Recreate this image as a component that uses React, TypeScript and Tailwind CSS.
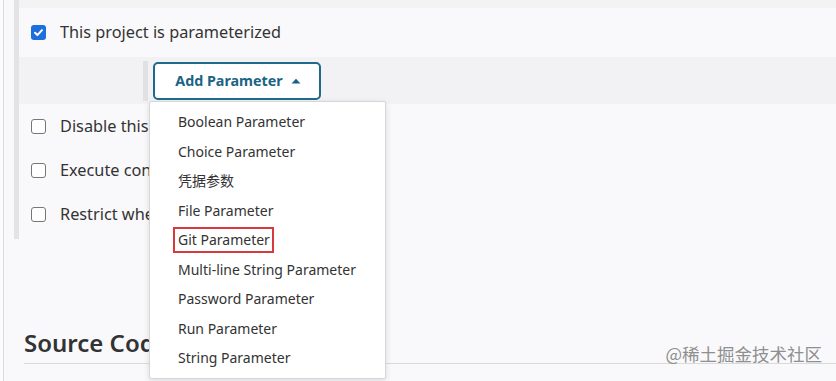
import { useState } from "react"

const items = [
  "Boolean Parameter",
  "Choice Parameter",
  "凭据参数",
  "File Parameter",
  "Git Parameter",
  "Multi-line String Parameter",
  "Password Parameter",
  "Run Parameter",
  "String Parameter",
];

const font = { fontFamily: '"Noto Sans", "Noto Sans CJK SC", sans-serif' };

const Checkbox = ({ checked }: { checked?: boolean }) =>
  checked ? (
    <span className="flex h-[15px] w-[15px] items-center justify-center rounded-[3px] bg-[#1c6fdc]">
      <svg width="11" height="11" viewBox="0 0 12 12" fill="none">
        <path d="M2.2 6.3 4.8 8.8 9.8 3.4" stroke="white" strokeWidth="2.2" strokeLinecap="round" strokeLinejoin="round" />
      </svg>
    </span>
  ) : (
    <span className="block h-[15px] w-[15px] rounded-[3px] border border-[#767676] bg-white" />
  );

const OptionRow = ({ label, checked }: { label: string; checked?: boolean }) => (
  <div className="flex h-[44px] items-center gap-[14px] pl-[12px]">
    <Checkbox checked={checked} />
    <span className="text-[16.3px] text-[#333]">{label}</span>
  </div>
);

export default function App() {
  const [open] = useState(true);

  return (
    <div className="relative flex h-[381px] w-[836px] overflow-hidden bg-[#f9f9fb] text-[#333]" style={font}>
      <div className="w-[4px] shrink-0 border-r border-[#dcdcdc] bg-[#fcfcfc]" />
      <div className="flex flex-1 flex-col pl-[10px]">
        <div className="flex border-l-[5px] border-[#e3e3e5]">
          <div className="flex flex-1 flex-col">
            <div className="h-[8px] bg-[#f3f3f4]" />
            <div className="flex h-[49px] items-center gap-[14px] pl-[12px]">
              <Checkbox checked />
              <span className="text-[16.3px] text-[#333]">This project is parameterized</span>
            </div>
            <div className="relative flex h-[47px] items-center bg-[#f2f2f4] pl-[124px]">
              <div className="h-[40px] w-[5px] bg-[#e1e1e3]" />
              <button className="ml-[5px] flex h-[38px] w-[168px] items-center justify-center gap-[8px] rounded-[5px] border-2 border-[#1f6a8a] bg-white pl-[2px] text-[14.3px] font-bold text-[#1b6385]">
                Add Parameter
                <svg width="10" height="6" viewBox="0 0 10 6">
                  <path d="M0.5 5.5 5 0.8 9.5 5.5Z" fill="#1b6385" />
                </svg>
              </button>
              {open && (
                <ul className="absolute left-[130px] top-[44px] z-10 w-[237px] rounded-[2px] border border-[#d6d6d6] bg-white py-[5px] shadow-[0_2px_6px_rgba(0,0,0,0.12)]">
                  {items.map((item) => (
                    <li key={item} className="flex h-[29.5px] items-center pl-[28px] text-[14px] text-[#333]">
                      <span
                        className={
                          item === "Git Parameter"
                            ? "-ml-[5px] border-2 border-[#d9383f] pr-[2px] pl-[3px] leading-[22px]"
                            : ""
                        }
                      >
                        {item}
                      </span>
                    </li>
                  ))}
                </ul>
              )}
            </div>
            <OptionRow label="Disable this project" />
            <OptionRow label="Execute concurrent builds if necessary" />
            <OptionRow label="Restrict where this project can be run" />
            <div className="h-[3px]" />
          </div>
        </div>
        <div className="mt-[89px] ml-[10px] border-b border-[#dadada] pb-[5px]">
          <h2 className="text-[24px] font-semibold leading-[30px] text-[#333]">Source Code Management</h2>
        </div>
      </div>
      <span
        className="absolute bottom-[14px] right-[14px] text-[17.5px] text-[#8f8f8f]"
        style={{ fontFamily: '"Noto Sans CJK SC", sans-serif' }}
      >
        @稀土掘金技术社区
      </span>
    </div>
  );
}
